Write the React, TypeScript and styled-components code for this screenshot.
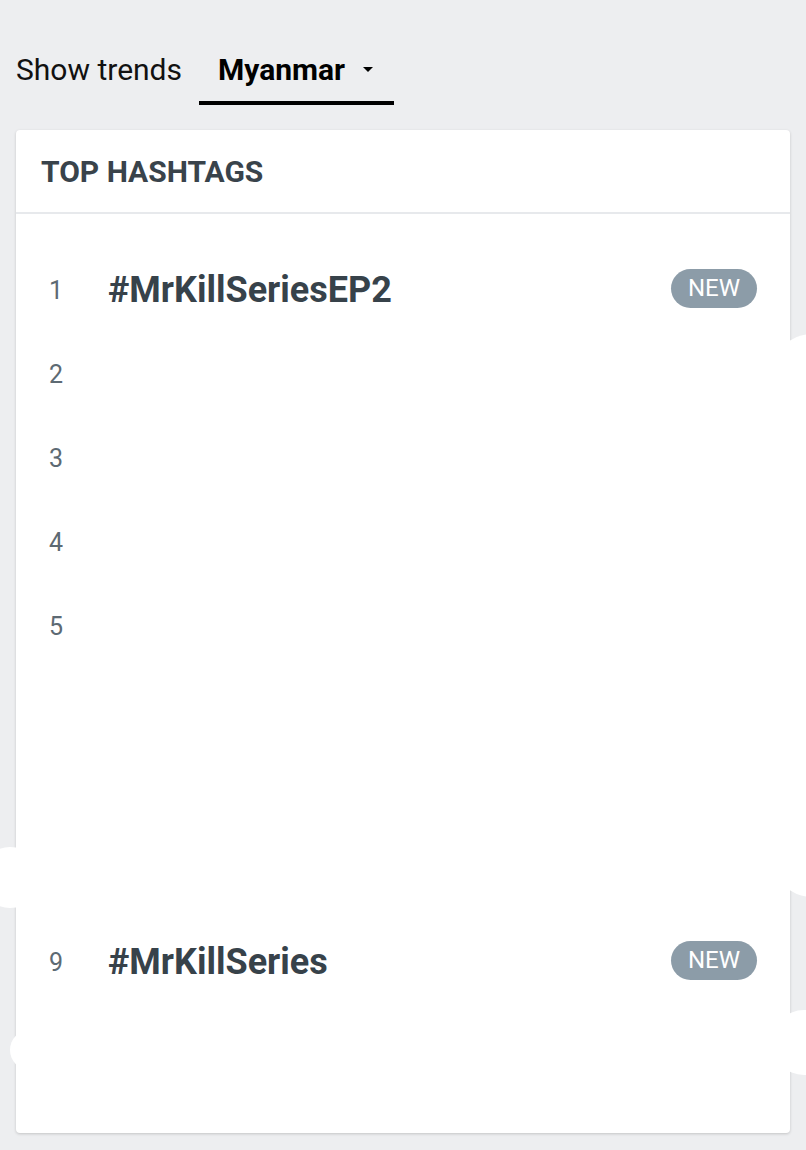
import React from 'react';
import styled, { createGlobalStyle } from 'styled-components';

const GlobalStyle = createGlobalStyle`
  html, body {
    margin: 0;
    padding: 0;
    background: #edeef0;
    font-family: Roboto, 'Noto Sans', Arial, sans-serif;
  }
`;

const Page = styled.div`
  position: relative;
  width: 806px;
  height: 1150px;
  padding: 0 16px;
  box-sizing: border-box;
  overflow: hidden;
`;

const TopBar = styled.div`
  display: flex;
  flex-direction: row;
  align-items: flex-end;
  height: 105px;
`;

const TrendsLabel = styled.span`
  font-size: 30px;
  line-height: 35px;
  color: #111;
  margin-bottom: 18px;
`;

const CountryTab = styled.button`
  display: flex;
  flex-direction: row;
  align-items: center;
  margin-left: 17px;
  padding: 0 21px 14px 19px;
  border: none;
  border-bottom: 4px solid #000;
  background: transparent;
  font-family: inherit;
  font-size: 30px;
  font-weight: 700;
  line-height: 35px;
  color: #000;
  cursor: pointer;
`;

const Caret = styled.span`
  margin-left: 18px;
  width: 0;
  height: 0;
  border-left: 5px solid transparent;
  border-right: 5px solid transparent;
  border-top: 5px solid #000;
`;

const Card = styled.section`
  margin-top: 25px;
  height: 1003px;
  background: #fff;
  border-radius: 4px;
  box-shadow: 0 1px 3px rgba(0, 0, 0, 0.18);
  display: flex;
  flex-direction: column;
`;

const CardHeader = styled.header`
  height: 82px;
  display: flex;
  align-items: center;
  padding: 0 25px;
  border-bottom: 2px solid #e7e9ec;
`;

const CardTitle = styled.h2`
  margin: 0;
  font-size: 30px;
  font-weight: 700;
  color: #39434b;
`;

const List = styled.ol`
  list-style: none;
  margin: 0;
  padding: 34px 33px 0 25px;
`;

const Row = styled.li`
  height: 84px;
  display: flex;
  flex-direction: row;
  align-items: center;
`;

const Rank = styled.span<{ $hidden?: boolean }>`
  width: 30px;
  text-align: center;
  font-size: 25px;
  color: #5d6a73;
  visibility: ${(p) => (p.$hidden ? 'hidden' : 'visible')};
`;

const Tag = styled.span`
  flex: 1;
  margin-left: 37px;
  font-size: 36px;
  font-weight: 700;
  color: #37424a;
`;

const NewBadge = styled.span`
  height: 39px;
  padding: 0 17px;
  display: flex;
  align-items: center;
  border-radius: 20px;
  background: #8c9ca8;
  color: #fff;
  font-size: 24px;
  margin-top: -4px;
`;

// white redaction blots that sit over the screenshot
const Blot = styled.div<{ $r: number }>`
  position: absolute;
  background: #fff;
  border-radius: ${(p) => p.$r}px;
`;

const rows = [
  { rank: 1, tag: '#MrKillSeriesEP2', isNew: true },
  { rank: 2 },
  { rank: 3 },
  { rank: 4 },
  { rank: 5 },
  { rank: 6, redacted: true },
  { rank: 7, redacted: true },
  { rank: 8, redacted: true },
  { rank: 9, tag: '#MrKillSeries', isNew: true },
  { rank: 10, redacted: true },
] as { rank: number; tag?: string; isNew?: boolean; redacted?: boolean }[];

const blots = [
  { left: 772, top: 334, width: 80, height: 563, r: 40 },
  { left: -20, top: 847, width: 60, height: 61, r: 30 },
  { left: 10, top: 1030, width: 40, height: 40, r: 20 },
  { left: 772, top: 1010, width: 80, height: 65, r: 32 },
];

export default function App() {
  return (
    <Page>
      <GlobalStyle />
      <TopBar>
        <TrendsLabel>Show trends</TrendsLabel>
        <CountryTab>
          Myanmar
          <Caret />
        </CountryTab>
      </TopBar>
      <Card>
        <CardHeader>
          <CardTitle>TOP HASHTAGS</CardTitle>
        </CardHeader>
        <List>
          {rows.map((row) => (
            <Row key={row.rank}>
              <Rank $hidden={row.redacted}>{row.rank}</Rank>
              <Tag>{row.tag}</Tag>
              {row.isNew && <NewBadge>NEW</NewBadge>}
            </Row>
          ))}
        </List>
      </Card>
      {blots.map((b, i) => (
        <Blot
          key={i}
          $r={b.r}
          style={{ left: b.left, top: b.top, width: b.width, height: b.height }}
        />
      ))}
    </Page>
  );
}
